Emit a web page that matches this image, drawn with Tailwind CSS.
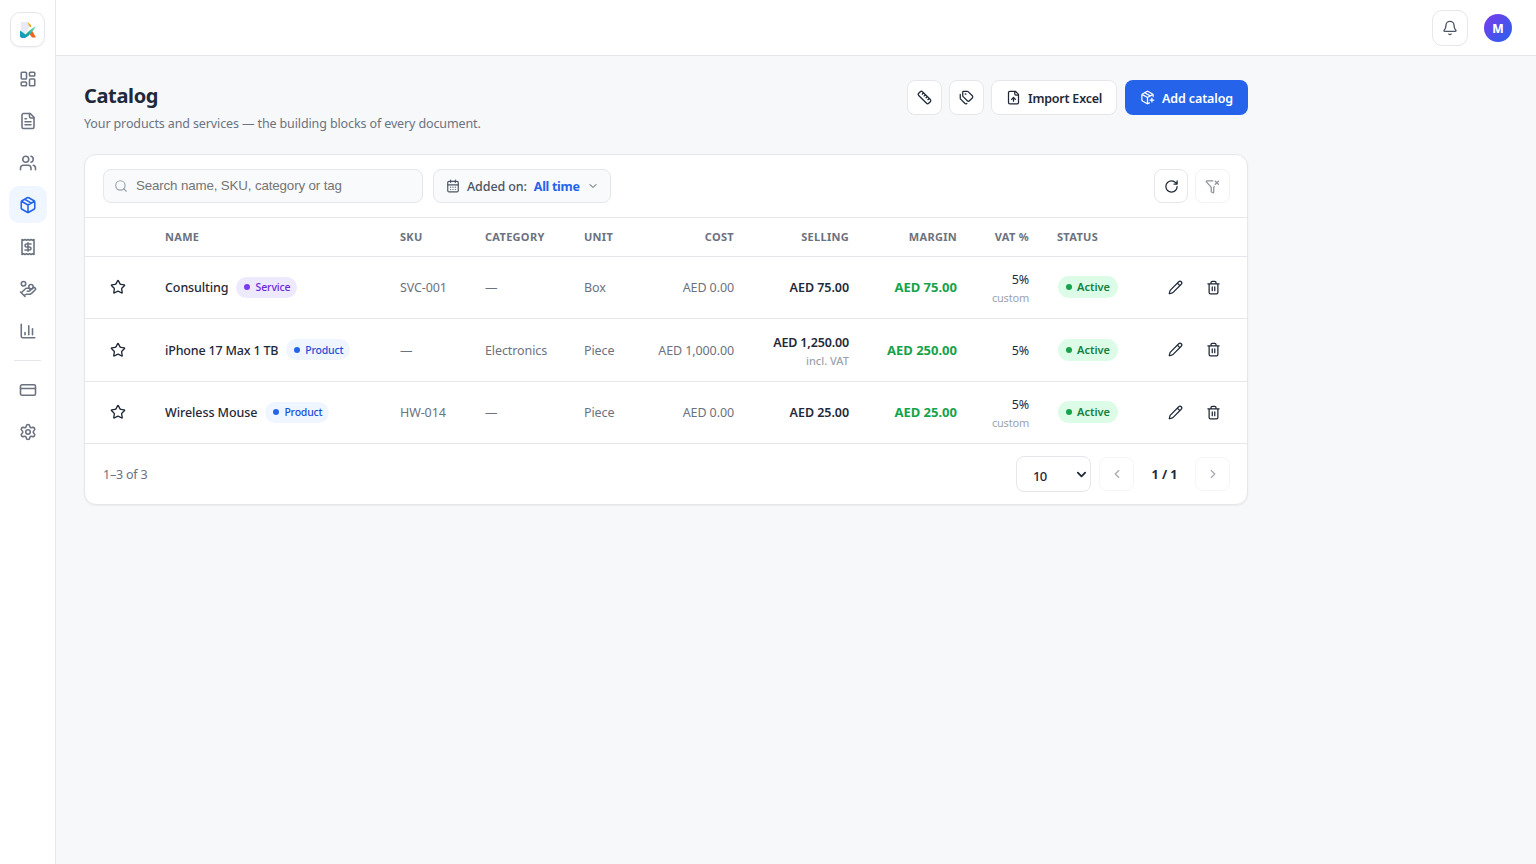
<!DOCTYPE html>
<html lang="en">
<head>
<meta charset="utf-8">
<title>Catalog</title>
<script src="https://cdn.jsdelivr.net/npm/@tailwindcss/browser@4"></script>
</head>
<body class="h-screen overflow-hidden bg-[#f7f8fa] font-['Noto_Sans',sans-serif] text-[12.5px] leading-5 text-[#1f2937]">
<svg class="hidden">
  <symbol id="dash" viewBox="0 0 24 24"><rect width="7" height="9" x="3" y="3" rx="1"/><rect width="7" height="5" x="14" y="3" rx="1"/><rect width="7" height="9" x="14" y="12" rx="1"/><rect width="7" height="5" x="3" y="16" rx="1"/></symbol>
  <symbol id="file" viewBox="0 0 24 24"><path d="M15 2H6a2 2 0 0 0-2 2v16a2 2 0 0 0 2 2h12a2 2 0 0 0 2-2V7Z"/><path d="M14 2v4a2 2 0 0 0 2 2h4M10 9H8M16 13H8M16 17H8"/></symbol>
  <symbol id="users" viewBox="0 0 24 24"><path d="M16 21v-2a4 4 0 0 0-4-4H6a4 4 0 0 0-4 4v2M16 3.128a4 4 0 0 1 0 7.744M22 21v-2a4 4 0 0 0-3-3.87"/><circle cx="9" cy="7" r="4"/></symbol>
  <symbol id="pkg" viewBox="0 0 24 24"><path d="M11 21.73a2 2 0 0 0 2 0l7-4A2 2 0 0 0 21 16V8a2 2 0 0 0-1-1.73l-7-4a2 2 0 0 0-2 0l-7 4A2 2 0 0 0 3 8v8a2 2 0 0 0 1 1.73zM12 22V12M3.29 7 12 12l8.71-5M7.5 4.27l9 5.15"/></symbol>
  <symbol id="receipt" viewBox="0 0 24 24"><path d="M4 2v20l2-1 2 1 2-1 2 1 2-1 2 1 2-1 2 1V2l-2 1-2-1-2 1-2-1-2 1-2-1-2 1Z"/><path d="M16 8h-6a2 2 0 1 0 0 4h4a2 2 0 1 1 0 4H8M12 17.5v-11"/></symbol>
  <symbol id="coins" viewBox="0 0 24 24"><path d="M11 15h2a2 2 0 1 0 0-4h-3c-.6 0-1.1.2-1.4.6L3 17M7 21l1.6-1.4c.3-.4.8-.6 1.4-.6h4c1.1 0 2.1-.4 2.8-1.2l4.6-4.4a2 2 0 0 0-2.75-2.91l-4.2 3.9M2 16l6 6"/><circle cx="16" cy="9" r="2.9"/><circle cx="6" cy="5" r="3"/></symbol>
  <symbol id="chart" viewBox="0 0 24 24"><path d="M3 3v16a2 2 0 0 0 2 2h16M18 17V9M13 17V5M8 17v-3"/></symbol>
  <symbol id="card" viewBox="0 0 24 24"><rect width="20" height="14" x="2" y="5" rx="2"/><path d="M2 10h20"/></symbol>
  <symbol id="gear" viewBox="0 0 24 24"><path d="M9.671 4.136a2.34 2.34 0 0 1 4.659 0 2.34 2.34 0 0 0 3.319 1.915 2.34 2.34 0 0 1 2.33 4.033 2.34 2.34 0 0 0 0 3.831 2.34 2.34 0 0 1-2.33 4.033 2.34 2.34 0 0 0-3.319 1.915 2.34 2.34 0 0 1-4.659 0 2.34 2.34 0 0 0-3.32-1.915 2.34 2.34 0 0 1-2.33-4.033 2.34 2.34 0 0 0 0-3.831A2.34 2.34 0 0 1 6.35 6.051a2.34 2.34 0 0 0 3.319-1.915"/><circle cx="12" cy="12" r="3"/></symbol>
  <symbol id="bell" viewBox="0 0 24 24"><path d="M10.268 21a2 2 0 0 0 3.464 0M3.262 15.326A1 1 0 0 0 4 17h16a1 1 0 0 0 .74-1.673C19.41 13.956 18 12.499 18 8A6 6 0 0 0 6 8c0 4.499-1.411 5.956-2.738 7.326"/></symbol>
  <symbol id="ruler" viewBox="0 0 24 24"><path d="M21.3 15.3a2.4 2.4 0 0 1 0 3.4l-2.6 2.6a2.4 2.4 0 0 1-3.4 0L2.7 8.7a2.41 2.41 0 0 1 0-3.4l2.6-2.6a2.41 2.41 0 0 1 3.4 0ZM14.5 12.5l2-2M11.5 9.5l2-2M8.5 6.5l2-2M17.5 15.5l2-2"/></symbol>
  <symbol id="tags" viewBox="0 0 24 24"><path d="M13.172 2a2 2 0 0 1 1.414.586l6.71 6.71a2.4 2.4 0 0 1 0 3.408l-4.592 4.592a2.4 2.4 0 0 1-3.408 0l-6.71-6.71A2 2 0 0 1 6 9.172V3a1 1 0 0 1 1-1zM2 7v6.172a2 2 0 0 0 .586 1.414l6.71 6.71a2.4 2.4 0 0 0 3.191.193"/><circle cx="10.5" cy="6.5" r=".5"/></symbol>
  <symbol id="fileup" viewBox="0 0 24 24"><path d="M15 2H6a2 2 0 0 0-2 2v16a2 2 0 0 0 2 2h12a2 2 0 0 0 2-2V7ZM14 2v4a2 2 0 0 0 2 2h4M12 12v6M15 15l-3-3-3 3"/></symbol>
  <symbol id="pkgplus" viewBox="0 0 24 24"><path d="M16 16h6M19 13v6M21 10V8a2 2 0 0 0-1-1.73l-7-4a2 2 0 0 0-2 0l-7 4A2 2 0 0 0 3 8v8a2 2 0 0 0 1 1.73l7 4a2 2 0 0 0 2 0l2-1.14M7.5 4.27l9 5.15M3.29 7 12 12l8.71-5M12 22V12"/></symbol>
  <symbol id="search" viewBox="0 0 24 24"><circle cx="11" cy="11" r="8"/><path d="m21 21-4.3-4.3"/></symbol>
  <symbol id="cal" viewBox="0 0 24 24"><path d="M8 2v4M16 2v4M3 10h18M8 14h.01M12 14h.01M16 14h.01M8 18h.01M12 18h.01M16 18h.01"/><rect width="18" height="18" x="3" y="4" rx="2"/></symbol>
  <symbol id="down" viewBox="0 0 24 24"><path d="m6 9 6 6 6-6"/></symbol>
  <symbol id="caret" viewBox="0 0 24 24"><path d="m4 8 8 8 8-8"/></symbol>
  <symbol id="left" viewBox="0 0 24 24"><path d="m15 18-6-6 6-6"/></symbol>
  <symbol id="right" viewBox="0 0 24 24"><path d="m9 18 6-6-6-6"/></symbol>
  <symbol id="rotate" viewBox="0 0 24 24"><path d="M21 12a9 9 0 1 1-9-9c2.52 0 4.93 1 6.74 2.74L21 8M21 3v5h-5"/></symbol>
  <symbol id="funnel" viewBox="0 0 24 24"><path d="M12.531 3H3a1 1 0 0 0-.742 1.67l7.225 7.989A2 2 0 0 1 10 14v6a1 1 0 0 0 .553.895l2 1A1 1 0 0 0 14 21v-7a2 2 0 0 1 .517-1.341l.427-.473M16.5 3.5l5 5M21.5 3.5l-5 5"/></symbol>
  <symbol id="pencil" viewBox="0 0 24 24"><path d="M21.174 6.812a1 1 0 0 0-3.986-3.987L3.842 16.174a2 2 0 0 0-.5.83l-1.321 4.352a.5.5 0 0 0 .623.622l4.353-1.32a2 2 0 0 0 .83-.497zM15 5l4 4"/></symbol>
  <symbol id="trash" viewBox="0 0 24 24"><path d="M3 6h18M19 6v14a2 2 0 0 1-2 2H7a2 2 0 0 1-2-2V6M8 6V4a2 2 0 0 1 2-2h4a2 2 0 0 1 2 2v2M10 11v6M14 11v6"/></symbol>
  <symbol id="star" viewBox="0 0 24 24"><path d="M11.525 2.295a.53.53 0 0 1 .95 0l2.31 4.679a2.123 2.123 0 0 0 1.595 1.16l5.166.756a.53.53 0 0 1 .294.904l-3.736 3.638a2.123 2.123 0 0 0-.611 1.878l.882 5.14a.53.53 0 0 1-.771.56l-4.618-2.428a2.122 2.122 0 0 0-1.973 0L6.396 21.01a.53.53 0 0 1-.77-.56l.881-5.139a2.122 2.122 0 0 0-.611-1.879L2.16 9.795a.53.53 0 0 1 .294-.906l5.165-.755a2.122 2.122 0 0 0 1.597-1.16z"/></symbol>
</svg>

<div class="flex h-full fill-none stroke-current stroke-2 [stroke-linecap:round] [stroke-linejoin:round]">
  <aside class="flex w-14 shrink-0 flex-col items-center border-r border-[#e5e7eb] bg-white pt-3 stroke-[2.1] text-[#6b7280]">
    <div class="flex size-[35px] shrink-0 items-center justify-center rounded-[10px] border border-[#e5e7eb] bg-white shadow-xs">
      <svg class="size-[18px] stroke-none" viewBox="0 0 18 18">
        <defs><linearGradient id="lg" x1="0" y1="1" x2="1" y2="0"><stop offset="0" stop-color="#1b8fd0"/><stop offset=".4" stop-color="#12a9a0"/><stop offset="1" stop-color="#8fe0a4"/></linearGradient></defs>
        <path fill="#e6ebf6" d="M2 1h6.500l2.500 3.500-3.500 7-2 1L2 10z"/>
        <path fill="#f7a521" d="M8.500 1 12 4v2.500L10 5z"/>
        <path fill="#f0641e" d="m11.500 11 1.500-1.500 4 7h-4L10 12.500z"/>
        <path fill="url(#lg)" d="M1 9.500v6l1.500 1.500H6C10 15 13.500 11 17 5c-4 2-7.500 5-10.500 8.500L4 11.500z"/>
      </svg>
    </div>
    <nav class="mt-[13px] flex flex-col items-center gap-[5px]">
      <a class="flex h-[37px] w-[38px] items-center justify-center"><svg class="size-[18px]"><use href="#dash"/></svg></a>
      <a class="flex h-[37px] w-[38px] items-center justify-center"><svg class="size-[18px]"><use href="#file"/></svg></a>
      <a class="flex h-[37px] w-[38px] items-center justify-center"><svg class="size-[18px]"><use href="#users"/></svg></a>
      <a class="flex h-[37px] w-[38px] items-center justify-center rounded-[10px] bg-[#eff6ff] text-[#2563eb]"><svg class="size-[18px]"><use href="#pkg"/></svg></a>
      <a class="flex h-[37px] w-[38px] items-center justify-center"><svg class="size-[18px]"><use href="#receipt"/></svg></a>
      <a class="flex h-[37px] w-[38px] items-center justify-center"><svg class="size-[18px]"><use href="#coins"/></svg></a>
      <a class="flex h-[37px] w-[38px] items-center justify-center"><svg class="size-[18px]"><use href="#chart"/></svg></a>
    </nav>
    <div class="mt-[11px] h-px w-[27px] bg-[#e5e7eb]"></div>
    <nav class="mt-[10px] flex flex-col items-center gap-[5px]">
      <a class="flex h-[37px] w-[38px] items-center justify-center"><svg class="size-[18px]"><use href="#card"/></svg></a>
      <a class="flex h-[37px] w-[38px] items-center justify-center"><svg class="size-[18px]"><use href="#gear"/></svg></a>
    </nav>
  </aside>

  <div class="flex min-w-0 flex-1 flex-col">
    <header class="flex h-14 shrink-0 items-center justify-end gap-4 border-b border-[#e5e7eb] bg-white pr-6">
      <div class="flex size-9 items-center justify-center rounded-[10px] border border-[#e5e7eb] text-[#4b5563]"><svg class="size-4"><use href="#bell"/></svg></div>
      <div class="flex size-7 items-center justify-center rounded-full bg-linear-135/srgb from-[#7c3aed] to-[#2563eb] pt-0.5 text-xs font-extrabold text-white">M</div>
    </header>

    <main class="w-[1220px] px-7 pt-6">
      <div class="flex h-[74px] items-start justify-between">
        <div>
          <h1 class="text-xl/8 font-bold tracking-[-0.35px]">Catalog</h1>
          <p class="mt-0.5 text-[12.5px]/5 tracking-[-0.12px] text-[#6b7280]">Your products and services — the building blocks of every document.</p>
        </div>
        <div class="flex gap-2 font-semibold">
          <button class="flex size-[35px] items-center justify-center rounded-lg border border-[#e5e7eb] bg-white"><svg class="size-[15px]"><use href="#ruler"/></svg></button>
          <button class="-ml-px flex size-[35px] items-center justify-center rounded-lg border border-[#e5e7eb] bg-white"><svg class="size-[15px]"><use href="#tags"/></svg></button>
          <button class="-ml-px flex h-[35px] w-[126px] items-center gap-[7px] rounded-lg border border-[#e5e7eb] bg-white pl-[14px] whitespace-nowrap"><svg class="size-[15px] shrink-0"><use href="#fileup"/></svg><span class="pt-[3px] tracking-[-0.22px]">Import Excel</span></button>
          <button class="flex h-[35px] w-[123px] items-center gap-[7px] rounded-lg bg-[#2563eb] pl-[15px] whitespace-nowrap text-white"><svg class="size-[15px] shrink-0"><use href="#pkgplus"/></svg><span class="pt-[3px] tracking-[-0.12px]">Add catalog</span></button>
        </div>
      </div>

      <section class="h-[351px] rounded-xl border border-[#e5e7eb] bg-white shadow-xs">
        <div class="flex h-[63px] items-center border-b border-[#e5e7eb] pr-[17px] pl-[18px]">
          <div class="flex h-[34px] w-[320px] items-center gap-2 rounded-lg border border-[#e5e7eb] bg-[#f9fafb] pl-[10px] font-['Liberation_Sans',sans-serif] text-[13.333px] tracking-[-0.14px] text-[#757575]"><svg class="size-[14px] text-[#9ca3af]"><use href="#search"/></svg>Search name, SKU, category or tag</div>
          <div class="ml-[10px] flex h-[34px] w-[178px] items-center rounded-lg border border-[#e5e7eb] bg-[#f9fafb] pl-3 whitespace-nowrap text-[#4b5563]"><svg class="mr-[7px] size-[14px] shrink-0"><use href="#cal"/></svg><span class="mr-[7px] pt-px font-medium tracking-[-0.1px]">Added on:</span><span class="pt-px font-bold tracking-[-0.3px] text-[#2563eb]">All time</span><svg class="ml-[7px] size-3 shrink-0"><use href="#down"/></svg></div>
          <button class="ml-auto flex size-[34px] items-center justify-center rounded-lg border border-[#e5e7eb]"><svg class="size-[15px]"><use href="#rotate"/></svg></button>
          <button class="ml-[7px] flex h-[34px] w-[35px] items-center justify-center rounded-lg border border-[#e5e7eb] opacity-50"><svg class="size-[15px]"><use href="#funnel"/></svg></button>
        </div>

        <div class="grid h-[39px] grid-cols-[80px_235px_85px_99px_55px_95px_115px_108px_72px_28px_75px_1fr] items-center border-b border-[#e5e7eb] text-[11px] font-bold tracking-[0.3px] text-[#6b7280]">
          <span></span><span>NAME</span><span>SKU</span><span>CATEGORY</span><span>UNIT</span><span class="text-right">COST</span><span class="text-right">SELLING</span><span class="text-right">MARGIN</span><span class="text-right">VAT %</span><span></span><span>STATUS</span><span></span>
        </div>

        <div class="grid h-[62px] grid-cols-[80px_235px_85px_99px_55px_95px_115px_108px_72px_28px_75px_1fr] items-center border-b border-[#e5e7eb] pb-px whitespace-nowrap tracking-[-0.1px] text-[#6b7280]">
          <svg class="ml-[25px] size-4 text-[#1f2937]"><use href="#star"/></svg>
          <div class="flex items-center gap-2 font-medium tracking-[-0.1px] text-[#1f2937]"><span class="pt-0.5">Consulting</span><span class="flex h-[21px] w-[61px] items-center gap-[5px] rounded-full bg-[#ede9fe] pl-2 text-[10.5px] tracking-[-0.1px] text-[#6d28d9]"><i class="size-1.5 rounded-full bg-[#7c3aed]"></i>Service</span></div>
          <span class="pt-0.5">SVC-001</span><span class="pt-0.5">—</span><span class="pt-0.5">Box</span><span class="pt-0.5 text-right">AED 0.00</span>
          <span class="pt-0.5 text-right font-semibold tracking-[-0.05px] text-[#1f2937]">AED 75.00</span>
          <span class="text-right text-[13px] font-bold tracking-normal text-[#16a34a]">AED 75.00</span>
          <span class="pt-[3px] text-right leading-[18px] text-[#1f2937]">5%<br><span class="text-[11px] tracking-[-0.2px] text-[#9ca3af]">custom</span></span><span></span>
          <span class="ml-px flex h-[22px] w-[60px] items-center gap-[5px] rounded-full bg-[#dcfce7] pl-2 text-[11px] font-semibold tracking-normal text-[#15803d]"><i class="size-1.5 rounded-full bg-[#16a34a]"></i>Active</span>
          <div class="flex justify-end gap-[23px] pr-[26px] text-[#1f2937]"><svg class="size-[15px]"><use href="#pencil"/></svg><svg class="size-[15px]"><use href="#trash"/></svg></div>
        </div>

        <div class="grid h-[63px] grid-cols-[80px_235px_85px_99px_55px_95px_115px_108px_72px_28px_75px_1fr] items-center border-b border-[#e5e7eb] pb-px whitespace-nowrap tracking-[-0.1px] text-[#6b7280]">
          <svg class="ml-[25px] size-4 text-[#1f2937]"><use href="#star"/></svg>
          <div class="flex items-center gap-2 font-medium tracking-[-0.18px] text-[#1f2937]"><span class="pt-0.5">iPhone 17 Max 1 TB</span><span class="flex h-[21px] w-[64px] items-center gap-[5px] rounded-full bg-[#eff6ff] pl-2 text-[10.5px] tracking-[-0.2px] text-[#1d4ed8]"><i class="size-1.5 rounded-full bg-[#2563eb]"></i>Product</span></div>
          <span class="pt-0.5">—</span><span class="pt-0.5">Electronics</span><span class="pt-0.5">Piece</span><span class="pt-0.5 text-right">AED 1,000.00</span>
          <span class="pt-[5px] text-right leading-[18px] font-semibold tracking-[-0.15px] text-[#1f2937]">AED 1,250.00<br><span class="text-[11px] font-medium tracking-normal text-[#9ca3af]">incl. VAT</span></span>
          <span class="text-right text-[13px] font-bold tracking-normal text-[#16a34a]">AED 250.00</span>
          <span class="pt-0.5 text-right text-[#1f2937]">5%</span><span></span>
          <span class="ml-px flex h-[22px] w-[60px] items-center gap-[5px] rounded-full bg-[#dcfce7] pl-2 text-[11px] font-semibold tracking-normal text-[#15803d]"><i class="size-1.5 rounded-full bg-[#16a34a]"></i>Active</span>
          <div class="flex justify-end gap-[23px] pr-[26px] text-[#1f2937]"><svg class="size-[15px]"><use href="#pencil"/></svg><svg class="size-[15px]"><use href="#trash"/></svg></div>
        </div>

        <div class="grid h-[62px] grid-cols-[80px_235px_85px_99px_55px_95px_115px_108px_72px_28px_75px_1fr] items-center border-b border-[#e5e7eb] pb-px whitespace-nowrap tracking-[-0.1px] text-[#6b7280]">
          <svg class="ml-[25px] size-4 text-[#1f2937]"><use href="#star"/></svg>
          <div class="flex items-center gap-2 font-medium tracking-[-0.08px] text-[#1f2937]"><span class="pt-0.5">Wireless Mouse</span><span class="flex h-[21px] w-[64px] items-center gap-[5px] rounded-full bg-[#eff6ff] pl-2 text-[10.5px] tracking-[-0.2px] text-[#1d4ed8]"><i class="size-1.5 rounded-full bg-[#2563eb]"></i>Product</span></div>
          <span class="pt-0.5">HW-014</span><span class="pt-0.5">—</span><span class="pt-0.5">Piece</span><span class="pt-0.5 text-right">AED 0.00</span>
          <span class="pt-0.5 text-right font-semibold tracking-[-0.05px] text-[#1f2937]">AED 25.00</span>
          <span class="text-right text-[13px] font-bold tracking-normal text-[#16a34a]">AED 25.00</span>
          <span class="pt-[3px] text-right leading-[18px] text-[#1f2937]">5%<br><span class="text-[11px] tracking-[-0.2px] text-[#9ca3af]">custom</span></span><span></span>
          <span class="ml-px flex h-[22px] w-[60px] items-center gap-[5px] rounded-full bg-[#dcfce7] pl-2 text-[11px] font-semibold tracking-normal text-[#15803d]"><i class="size-1.5 rounded-full bg-[#16a34a]"></i>Active</span>
          <div class="flex justify-end gap-[23px] pr-[26px] text-[#1f2937]"><svg class="size-[15px]"><use href="#pencil"/></svg><svg class="size-[15px]"><use href="#trash"/></svg></div>
        </div>

        <div class="flex h-[60px] items-center pr-[17px] pl-[18px]">
          <span class="mr-auto pt-0.5 tracking-[-0.2px] text-[#6b7280]">1–3 of 3</span>
          <div class="flex h-9 w-[75px] items-center justify-between rounded-lg border border-[#e5e7eb] pr-[3px] pl-4 text-[13px] font-medium"><span class="pt-[3px] tracking-[-0.8px]">10</span><svg class="size-[11px] stroke-[4]"><use href="#caret"/></svg></div>
          <button class="ml-2 flex h-[34px] w-[35px] items-center justify-center rounded-lg border border-[#e5e7eb] opacity-40"><svg class="size-[14px]"><use href="#left"/></svg></button>
          <span class="w-[61px] pt-px text-center font-bold">1 / 1</span>
          <button class="flex h-[34px] w-[35px] items-center justify-center rounded-lg border border-[#e5e7eb] opacity-40"><svg class="size-[14px]"><use href="#right"/></svg></button>
        </div>
      </section>
    </main>
  </div>
</div>
</body>
</html>
